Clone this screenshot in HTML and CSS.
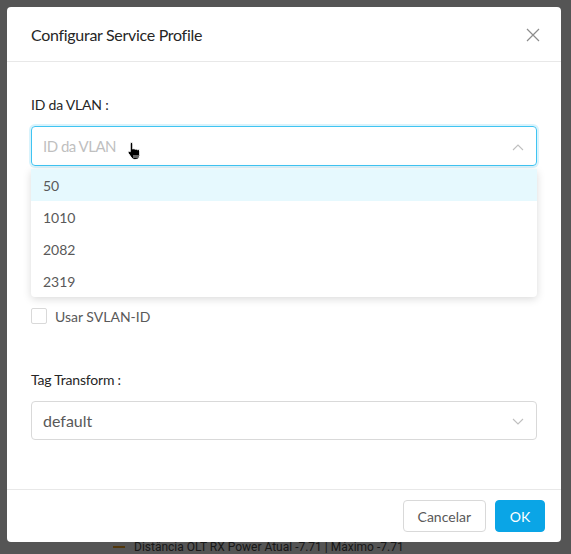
FILE: index.html
```html
<!DOCTYPE html>
<html lang="pt">
<head>
<meta charset="utf-8">
<title>Configurar Service Profile</title>
<link rel="stylesheet" href="styles.css">
</head>
<body>
<div class="page">
  <div class="legend"><span class="legend-dash"></span>Distância OLT RX Power Atual -7.71 | Máximo -7.71</div>
</div>
<div class="mask"></div>
<div class="modal">
  <div class="modal-header">
    <div class="modal-title">Configurar Service Profile</div>
    <svg class="close" width="14" height="14" viewBox="0 0 14 14"><path d="M1 1L13 13M13 1L1 13" stroke="#8c8c8c" stroke-width="1.2" fill="none"/></svg>
  </div>
  <div class="modal-body">
    <div class="form-item first">
      <div class="label">ID da VLAN :</div>
      <div class="select focused">
        <span class="placeholder">ID da VLAN</span>
        <svg class="arrow" width="12" height="8" viewBox="0 0 12 8"><path d="M1 7L6 2L11 7" stroke="#bfbfbf" stroke-width="1.1" fill="none"/></svg>
        <svg class="cursor" width="16" height="20" viewBox="0 0 16 20"><path d="M4.5 1.5c.8 0 1.3.6 1.3 1.4v5.2c.3-.3.7-.4 1.1-.4.6 0 1 .3 1.2.7.3-.3.7-.4 1.1-.4.6 0 1.1.4 1.2.9.3-.2.6-.3 1-.3.8 0 1.3.6 1.3 1.4v4.6c0 2.3-1.6 3.9-3.900 3.9H7.6c-1.2 0-2.2-.5-2.9-1.4L1.4 12.3c-.4-.6-.3-1.300.2-1.7.5-.4 1.2-.3 1.6.2V2.9c0-.8.5-1.4 1.3-1.4z" fill="#000" stroke="#fff" stroke-width="1"/><path d="M7 14v3M9 14v3M11 14v3" stroke="#fff" stroke-width=".8"/></svg>
      </div>
      <ul class="dropdown">
        <li class="option active">50</li>
        <li class="option">1010</li>
        <li class="option">2082</li>
        <li class="option">2319</li>
      </ul>
    </div>
    <div class="spacer"></div>
    <label class="checkbox-row">
      <span class="checkbox"></span>
      <span class="checkbox-text">Usar SVLAN-ID</span>
    </label>
    <div class="form-item tag">
      <div class="label">Tag Transform :</div>
      <div class="select">
        <span class="value">default</span>
        <svg class="arrow" width="12" height="8" viewBox="0 0 12 8"><path d="M1 1L6 6L11 1" stroke="#bfbfbf" stroke-width="1.1" fill="none"/></svg>
      </div>
    </div>
  </div>
  <div class="modal-footer">
    <button class="btn">Cancelar</button>
    <button class="btn primary">OK</button>
  </div>
</div>
</body>
</html>
```
FILE: styles.css
```css
* { box-sizing: border-box; }
html, body { margin: 0; padding: 0; }
body {
  width: 571px;
  height: 554px;
  overflow: hidden;
  background: #ffffff;
  font-family: "Lato", "Noto Sans", sans-serif;
  position: relative;
}
.page {
  width: 571px;
  height: 554px;
  display: flex;
  flex-direction: column;
  justify-content: flex-end;
  padding: 0 0 0 113px;
}
.legend {
  font-family: "Roboto", sans-serif;
  font-size: 12px;
  color: #4a4a4a;
  line-height: 14px;
  display: flex;
  align-items: center;
}
.legend-dash {
  width: 12px;
  height: 2px;
  background: #f5a623;
  margin-right: 9px;
}
.mask {
  position: absolute;
  inset: 0;
  background: rgba(0, 0, 0, 0.667);
}
.modal {
  position: absolute;
  left: 7px;
  top: 7px;
  width: 554px;
  height: 535px;
  background: #fff;
  border-radius: 4px;
  display: flex;
  flex-direction: column;
}
.modal-header {
  display: flex;
  align-items: center;
  justify-content: space-between;
  padding: 17px 21px 15px 24px;
  border-bottom: 1px solid #e8e8e8;
  height: 55px;
}
.modal-title {
  font-size: 16px;
  line-height: 22px;
  color: #262626;
  letter-spacing: -0.3px;
}
.modal-body {
  flex: 1;
  padding: 32px 24px 0;
}
.form-item { position: relative; }
.label {
  font-size: 14px;
  line-height: 22px;
  color: #262626;
  padding-bottom: 10px;
  letter-spacing: -0.2px;
}
.select {
  position: relative;
  height: 40px;
  border: 1px solid #d9d9d9;
  border-radius: 4px;
  display: flex;
  align-items: center;
  padding: 0 11px;
  font-size: 16px;
}
.select.focused {
  border-color: #40c4f2;
  box-shadow: 0 0 0 2px rgba(64, 196, 242, 0.2);
}
.placeholder {
  color: #bfbfbf;
  font-size: 15px;
  letter-spacing: -0.5px;
}
.value { color: #595959; }
.arrow {
  position: absolute;
  right: 12px;
  top: 16px;
}
.cursor {
  position: absolute;
  left: 95px;
  top: 14px;
}
.dropdown {
  position: absolute;
  left: 0;
  right: 0;
  top: 75px;
  margin: 0;
  padding: 0;
  list-style: none;
  background: #fff;
  border-radius: 4px;
  box-shadow: 0 2px 8px rgba(0, 0, 0, 0.15);
  z-index: 2;
}
.option {
  height: 32px;
  line-height: 33px;
  padding: 0 12px;
  font-size: 14px;
  color: #595959;
}
.option.active { background: #e6f9fe; }
.spacer { height: 142px; }
.checkbox-row {
  display: flex;
  align-items: center;
  height: 16px;
  gap: 8px;
}
.checkbox {
  width: 16px;
  height: 16px;
  border: 1px solid #d9d9d9;
  border-radius: 2px;
  background: #fff;
}
.checkbox-text {
  font-size: 14px;
  color: #595959;
}
.tag { margin-top: 45px; }
.tag .select { height: 39px; }
.modal-footer {
  border-top: 1px solid #e8e8e8;
  padding: 10px 16px;
  display: flex;
  justify-content: flex-end;
  gap: 9px;
}
.btn {
  height: 32px;
  padding: 0 14px;
  font-family: inherit;
  font-size: 14px;
  border: 1px solid #d9d9d9;
  border-radius: 4px;
  background: #fff;
  color: #595959;
}
.btn.primary {
  background: #0aa5e6;
  border-color: #0aa5e6;
  color: #fff;
  width: 50px;
  padding: 0;
}
```
